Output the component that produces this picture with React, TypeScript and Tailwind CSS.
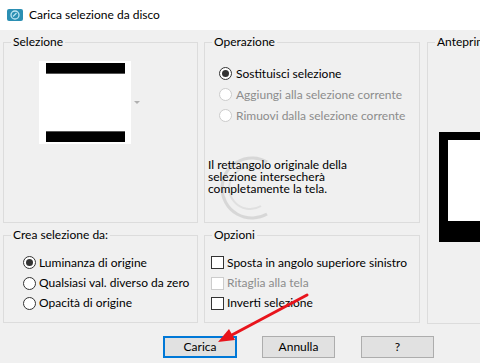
import React from 'react';

// Radio button glyph in the Windows 10 classic dialog style
function Radio({ checked = false, disabled = false }: { checked?: boolean; disabled?: boolean }) {
  return (
    <span
      className={`shrink-0 w-[13px] h-[13px] rounded-full border bg-white flex items-center justify-center ${
        disabled ? 'border-[#cccccc]' : 'border-[#333333]'
      }`}
    >
      {checked && <span className="w-[7px] h-[7px] rounded-full bg-[#333333]" />}
    </span>
  );
}

function Check({ disabled = false }: { disabled?: boolean }) {
  return (
    <span
      className={`shrink-0 w-[13px] h-[13px] border bg-white ${disabled ? 'border-[#cccccc]' : 'border-[#333333]'}`}
    />
  );
}

function Group({ title, className, children }: { title: string; className: string; children?: React.ReactNode }) {
  return (
    <fieldset className={`border border-[#dcdcdc] m-0 p-0 min-w-0 ${className}`}>
      <legend className="ml-[7px] px-[2px] leading-[16px] whitespace-nowrap">{title}</legend>
      {children}
    </fieldset>
  );
}

export default function App() {
  return (
    <div className="relative w-[480px] h-[363px] overflow-hidden bg-[#f0f0f0] text-[12px] text-black whitespace-nowrap font-['Lato','Liberation_Sans',sans-serif]">
      {/* Title bar */}
      <div className="h-[30px] bg-white flex items-center pl-[7px] gap-[5px]">
        <svg width="16" height="14" viewBox="0 0 16 14">
          <rect x="0" y="1" width="16" height="12" rx="2" fill="#2b8fb3" />
          <circle cx="8" cy="7" r="4" fill="none" stroke="#bfe6f2" strokeWidth="1.3" />
          <path d="M6 8.5 L9.5 5" stroke="#bfe6f2" strokeWidth="1.2" />
        </svg>
        <span className="text-[12px] ml-[1px]">Carica selezione da disco</span>
      </div>

      {/* Body */}
      <div className="flex pt-[4px] pl-[3px]">
        <div className="flex flex-col w-[195px] shrink-0 gap-[4px]">
          <Group title="Selezione" className="h-[189px]">
            <div className="flex items-center mt-[11px] ml-[35px]">
              <div className="w-[92px] h-[83px] bg-white flex flex-col justify-between items-center py-[2px]">
                <div className="w-[79px] h-[11px] bg-black border-b border-[#555555]" />
                <div className="w-[79px] h-[11px] bg-black border-t border-[#555555]" />
              </div>
              <svg width="6" height="4" viewBox="0 0 6 4" className="ml-[3px]">
                <path d="M0 0 H6 L3 3 Z" fill="#b0b0b0" />
              </svg>
            </div>
          </Group>
          <Group title="Crea selezione da:" className="h-[96px]">
            <div className="flex flex-col mt-[9px] pl-[19px]">
              <div className="h-[21px] flex items-center gap-[3px]">
                <Radio checked />
                <span>Luminanza di origine</span>
              </div>
              <div className="h-[20px] flex items-center gap-[3px]">
                <Radio />
                <span>Qualsiasi val. diverso da zero</span>
              </div>
              <div className="h-[20px] flex items-center gap-[3px]">
                <Radio />
                <span>Opacità di origine</span>
              </div>
            </div>
          </Group>
        </div>

        <div className="flex flex-col w-[216px] shrink-0 ml-[6px] gap-[4px]">
          <Group title="Operazione" className="h-[189px] relative">
            <svg width="60" height="80" viewBox="0 0 60 80" className="absolute left-[12px] top-[98px] opacity-60">
              <path d="M50 14 A30 30 0 1 0 50 66" fill="none" stroke="#c8c8c8" strokeWidth="3" />
              <path d="M44 22 A21 21 0 1 0 44 58" fill="none" stroke="#d6d6d6" strokeWidth="2" />
            </svg>
            <div className="relative flex flex-col mt-[13px] pl-[14px]">
              <div className="h-[21px] flex items-center gap-[4px]">
                <Radio checked />
                <span>Sostituisci selezione</span>
              </div>
              <div className="h-[21px] flex items-center gap-[4px] text-[#8c8c8c]">
                <Radio disabled />
                <span>Aggiungi alla selezione corrente</span>
              </div>
              <div className="h-[21px] flex items-center gap-[4px] text-[#8c8c8c]">
                <Radio disabled />
                <span>Rimuovi dalla selezione corrente</span>
              </div>
              <p className="relative mt-[33px] -ml-[11px] leading-[12px] whitespace-normal w-[170px]">
                Il rettangolo originale della selezione intersecherà completamente la tela.
              </p>
            </div>
          </Group>
          <Group title="Opzioni" className="h-[96px]">
            <div className="flex flex-col mt-[9px] pl-[6px]">
              <div className="h-[21px] flex items-center gap-[3px]">
                <Check />
                <span>Sposta in angolo superiore sinistro</span>
              </div>
              <div className="h-[20px] flex items-center gap-[3px] text-[#8c8c8c]">
                <Check disabled />
                <span>Ritaglia alla tela</span>
              </div>
              <div className="h-[20px] flex items-center gap-[3px]">
                <Check />
                <span>Inverti selezione</span>
              </div>
            </div>
          </Group>
        </div>

        <Group title="Anteprima" className="ml-[7px] w-[120px] h-[290px] shrink-0">
          <div className="mt-[82px] ml-[11px] w-[80px] h-[110px] bg-white border-black border-l-[9px] border-t-[8px] border-b-[21px]" />
        </Group>
      </div>

      {/* Buttons */}
      <div className="flex mt-[12px] pl-[163px]">
        <button className="w-[74px] h-[22px] bg-[#e1e1e1] border-2 border-[#0078d7]">Carica</button>
        <button className="w-[73px] h-[22px] ml-[25px] bg-[#e1e1e1] border border-[#adadad]">Annulla</button>
        <button className="w-[73px] h-[22px] ml-[26px] bg-[#e1e1e1] border border-[#adadad]">?</button>
      </div>

      {/* Red annotation arrow */}
      <svg width="480" height="363" className="absolute left-0 top-0 pointer-events-none">
        <line x1="307" y1="295" x2="230" y2="336" stroke="#e8141c" strokeWidth="3" strokeLinecap="round" />
        <polygon points="218,342 235,340 229,329" fill="#e8141c" />
      </svg>
    </div>
  );
}
